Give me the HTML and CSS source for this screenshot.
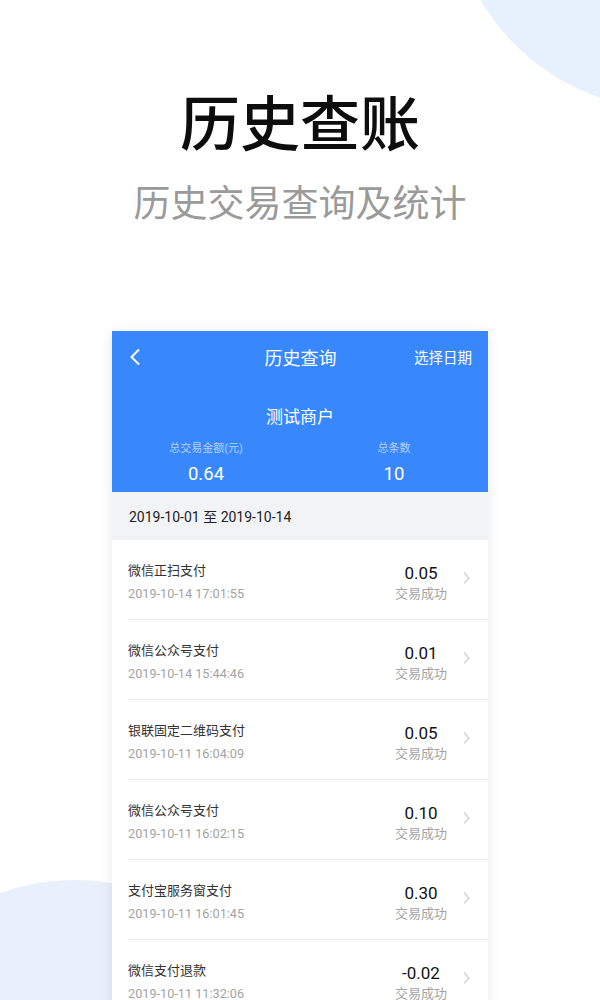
FILE: index.html
```html
<!DOCTYPE html>
<html lang="zh-CN">
<head>
    <meta charset="UTF-8">
    <meta name="viewport" content="width=device-width, initial-scale=1.0">
    <title>历史查账</title>
    <link rel="stylesheet" href="styles.css">
</head>
<body>
    <div class="bubble bubble-top"></div>
    <div class="bubble bubble-bottom"></div>

    <div class="hero">
        <h1>历史查账</h1>
        <p>历史交易查询及统计</p>
    </div>

    <div class="phone">
        <div class="header">
            <div class="nav">
                <span class="back">
                    <svg width="12" height="18" viewBox="0 0 12 18"><path d="M10 1.5 L2.5 9 L10 16.5" fill="none" stroke="#fff" stroke-width="2"/></svg>
                </span>
                <span class="nav-title">历史查询</span>
                <span class="nav-action">选择日期</span>
            </div>
            <div class="merchant">测试商户</div>
            <div class="stats">
                <div class="stat">
                    <div class="stat-label">总交易金额(元)</div>
                    <div class="stat-value">0.64</div>
                </div>
                <div class="stat">
                    <div class="stat-label">总条数</div>
                    <div class="stat-value">10</div>
                </div>
            </div>
        </div>

        <div class="range">2019-10-01 至 2019-10-14</div>

        <ul class="list">
            <li class="row">
                <div class="info">
                    <div class="name">微信正扫支付</div>
                    <div class="time">2019-10-14 17:01:55</div>
                </div>
                <div class="amount">
                    <div class="money">0.05</div>
                    <div class="status">交易成功</div>
                </div>
                <span class="chev"><svg width="7" height="12" viewBox="0 0 7 12"><path d="M1 0.5 L6 6 L1 11.5" fill="none" stroke="#cfcfcf" stroke-width="1.2"/></svg></span>
            </li>
            <li class="row">
                <div class="info">
                    <div class="name">微信公众号支付</div>
                    <div class="time">2019-10-14 15:44:46</div>
                </div>
                <div class="amount">
                    <div class="money">0.01</div>
                    <div class="status">交易成功</div>
                </div>
                <span class="chev"><svg width="7" height="12" viewBox="0 0 7 12"><path d="M1 0.5 L6 6 L1 11.5" fill="none" stroke="#cfcfcf" stroke-width="1.2"/></svg></span>
            </li>
            <li class="row">
                <div class="info">
                    <div class="name">银联固定二维码支付</div>
                    <div class="time">2019-10-11 16:04:09</div>
                </div>
                <div class="amount">
                    <div class="money">0.05</div>
                    <div class="status">交易成功</div>
                </div>
                <span class="chev"><svg width="7" height="12" viewBox="0 0 7 12"><path d="M1 0.5 L6 6 L1 11.5" fill="none" stroke="#cfcfcf" stroke-width="1.2"/></svg></span>
            </li>
            <li class="row">
                <div class="info">
                    <div class="name">微信公众号支付</div>
                    <div class="time">2019-10-11 16:02:15</div>
                </div>
                <div class="amount">
                    <div class="money">0.10</div>
                    <div class="status">交易成功</div>
                </div>
                <span class="chev"><svg width="7" height="12" viewBox="0 0 7 12"><path d="M1 0.5 L6 6 L1 11.5" fill="none" stroke="#cfcfcf" stroke-width="1.2"/></svg></span>
            </li>
            <li class="row">
                <div class="info">
                    <div class="name">支付宝服务窗支付</div>
                    <div class="time">2019-10-11 16:01:45</div>
                </div>
                <div class="amount">
                    <div class="money">0.30</div>
                    <div class="status">交易成功</div>
                </div>
                <span class="chev"><svg width="7" height="12" viewBox="0 0 7 12"><path d="M1 0.5 L6 6 L1 11.5" fill="none" stroke="#cfcfcf" stroke-width="1.2"/></svg></span>
            </li>
            <li class="row">
                <div class="info">
                    <div class="name">微信支付退款</div>
                    <div class="time">2019-10-11 11:32:06</div>
                </div>
                <div class="amount">
                    <div class="money">-0.02</div>
                    <div class="status">交易成功</div>
                </div>
                <span class="chev"><svg width="7" height="12" viewBox="0 0 7 12"><path d="M1 0.5 L6 6 L1 11.5" fill="none" stroke="#cfcfcf" stroke-width="1.2"/></svg></span>
            </li>
        </ul>
    </div>
</body>
</html>
```

FILE: styles.css
```css
* {
    box-sizing: border-box;
}

html, body {
    height: 100%;
    overflow: hidden;
}

body {
    margin: 0;
    position: relative;
    background: #fff;
    font-family: Roboto, "Noto Sans CJK SC", sans-serif;
    color: #222;
}

/* soft background circles */
.bubble {
    position: absolute;
    border-radius: 50%;
    background: #e7f0fd;
}

.bubble-top {
    width: 438px;
    height: 438px;
    left: 451px;
    top: -329px;
}

.bubble-bottom {
    width: 446px;
    height: 446px;
    left: -148px;
    top: 880px;
    background: #e9f0fb;
}

.hero {
    position: relative;
    text-align: center;
    padding-top: 84px;
}

.hero h1 {
    margin: 0;
    font-family: "Noto Sans CJK SC", sans-serif;
    font-size: 60px;
    font-weight: 500;
    line-height: 72px;
    color: #0d0d0d;
}

.hero p {
    margin: 22px 0 0;
    font-family: "Noto Sans CJK SC", sans-serif;
    font-size: 37px;
    line-height: 46px;
    color: #9a9a9a;
}

.phone {
    position: relative;
    width: 376px;
    margin: 107px auto 0;
    background: #fff;
    box-shadow: 0 2px 14px rgba(0, 0, 0, 0.09);
}

.header {
    background: #3887fd;
    color: #fff;
    padding-bottom: 5px;
}

.nav {
    height: 51px;
    display: flex;
    align-items: center;
    justify-content: space-between;
    padding: 0 16px 0 17px;
}

.back {
    width: 60px;
    display: flex;
    align-items: center;
}

.nav-title {
    font-size: 18px;
}

.nav-action {
    width: 60px;
    text-align: right;
    font-size: 14.5px;
}

.merchant {
    margin-top: 23px;
    text-align: center;
    font-size: 17px;
    line-height: 24px;
}

.stats {
    display: flex;
    margin-top: 12px;
}

.stat {
    flex: 1;
    text-align: center;
}

.stat-label {
    font-size: 11px;
    line-height: 16px;
    color: rgba(255, 255, 255, 0.62);
}

.stat-value {
    margin-top: 4px;
    font-size: 18.5px;
    line-height: 26px;
}

.range {
    height: 48px;
    display: flex;
    align-items: center;
    padding-left: 17px;
    background: #f2f3f5;
    font-size: 14px;
    color: #222;
}

.list {
    list-style: none;
    margin: 0;
    padding: 0;
}

.row {
    height: 80px;
    margin-left: 16px;
    padding-right: 15px;
    display: flex;
    align-items: flex-start;
    border-bottom: 1px solid #ececec;
}

.info {
    flex: 1;
    padding-top: 21px;
}

.name {
    font-size: 13px;
    line-height: 20px;
    color: #333;
}

.time {
    margin-top: 3px;
    font-size: 12.7px;
    line-height: 20px;
    color: #a3a3a3;
}

.amount {
    width: 70px;
    text-align: center;
    padding-top: 21px;
}

.money {
    font-size: 17px;
    line-height: 24px;
    color: #111;
}

.status {
    font-size: 13px;
    line-height: 18px;
    color: #a3a3a3;
}

.chev {
    width: 14px;
    margin-left: 3px;
    padding-top: 32px;
    display: flex;
    justify-content: center;
}
```
